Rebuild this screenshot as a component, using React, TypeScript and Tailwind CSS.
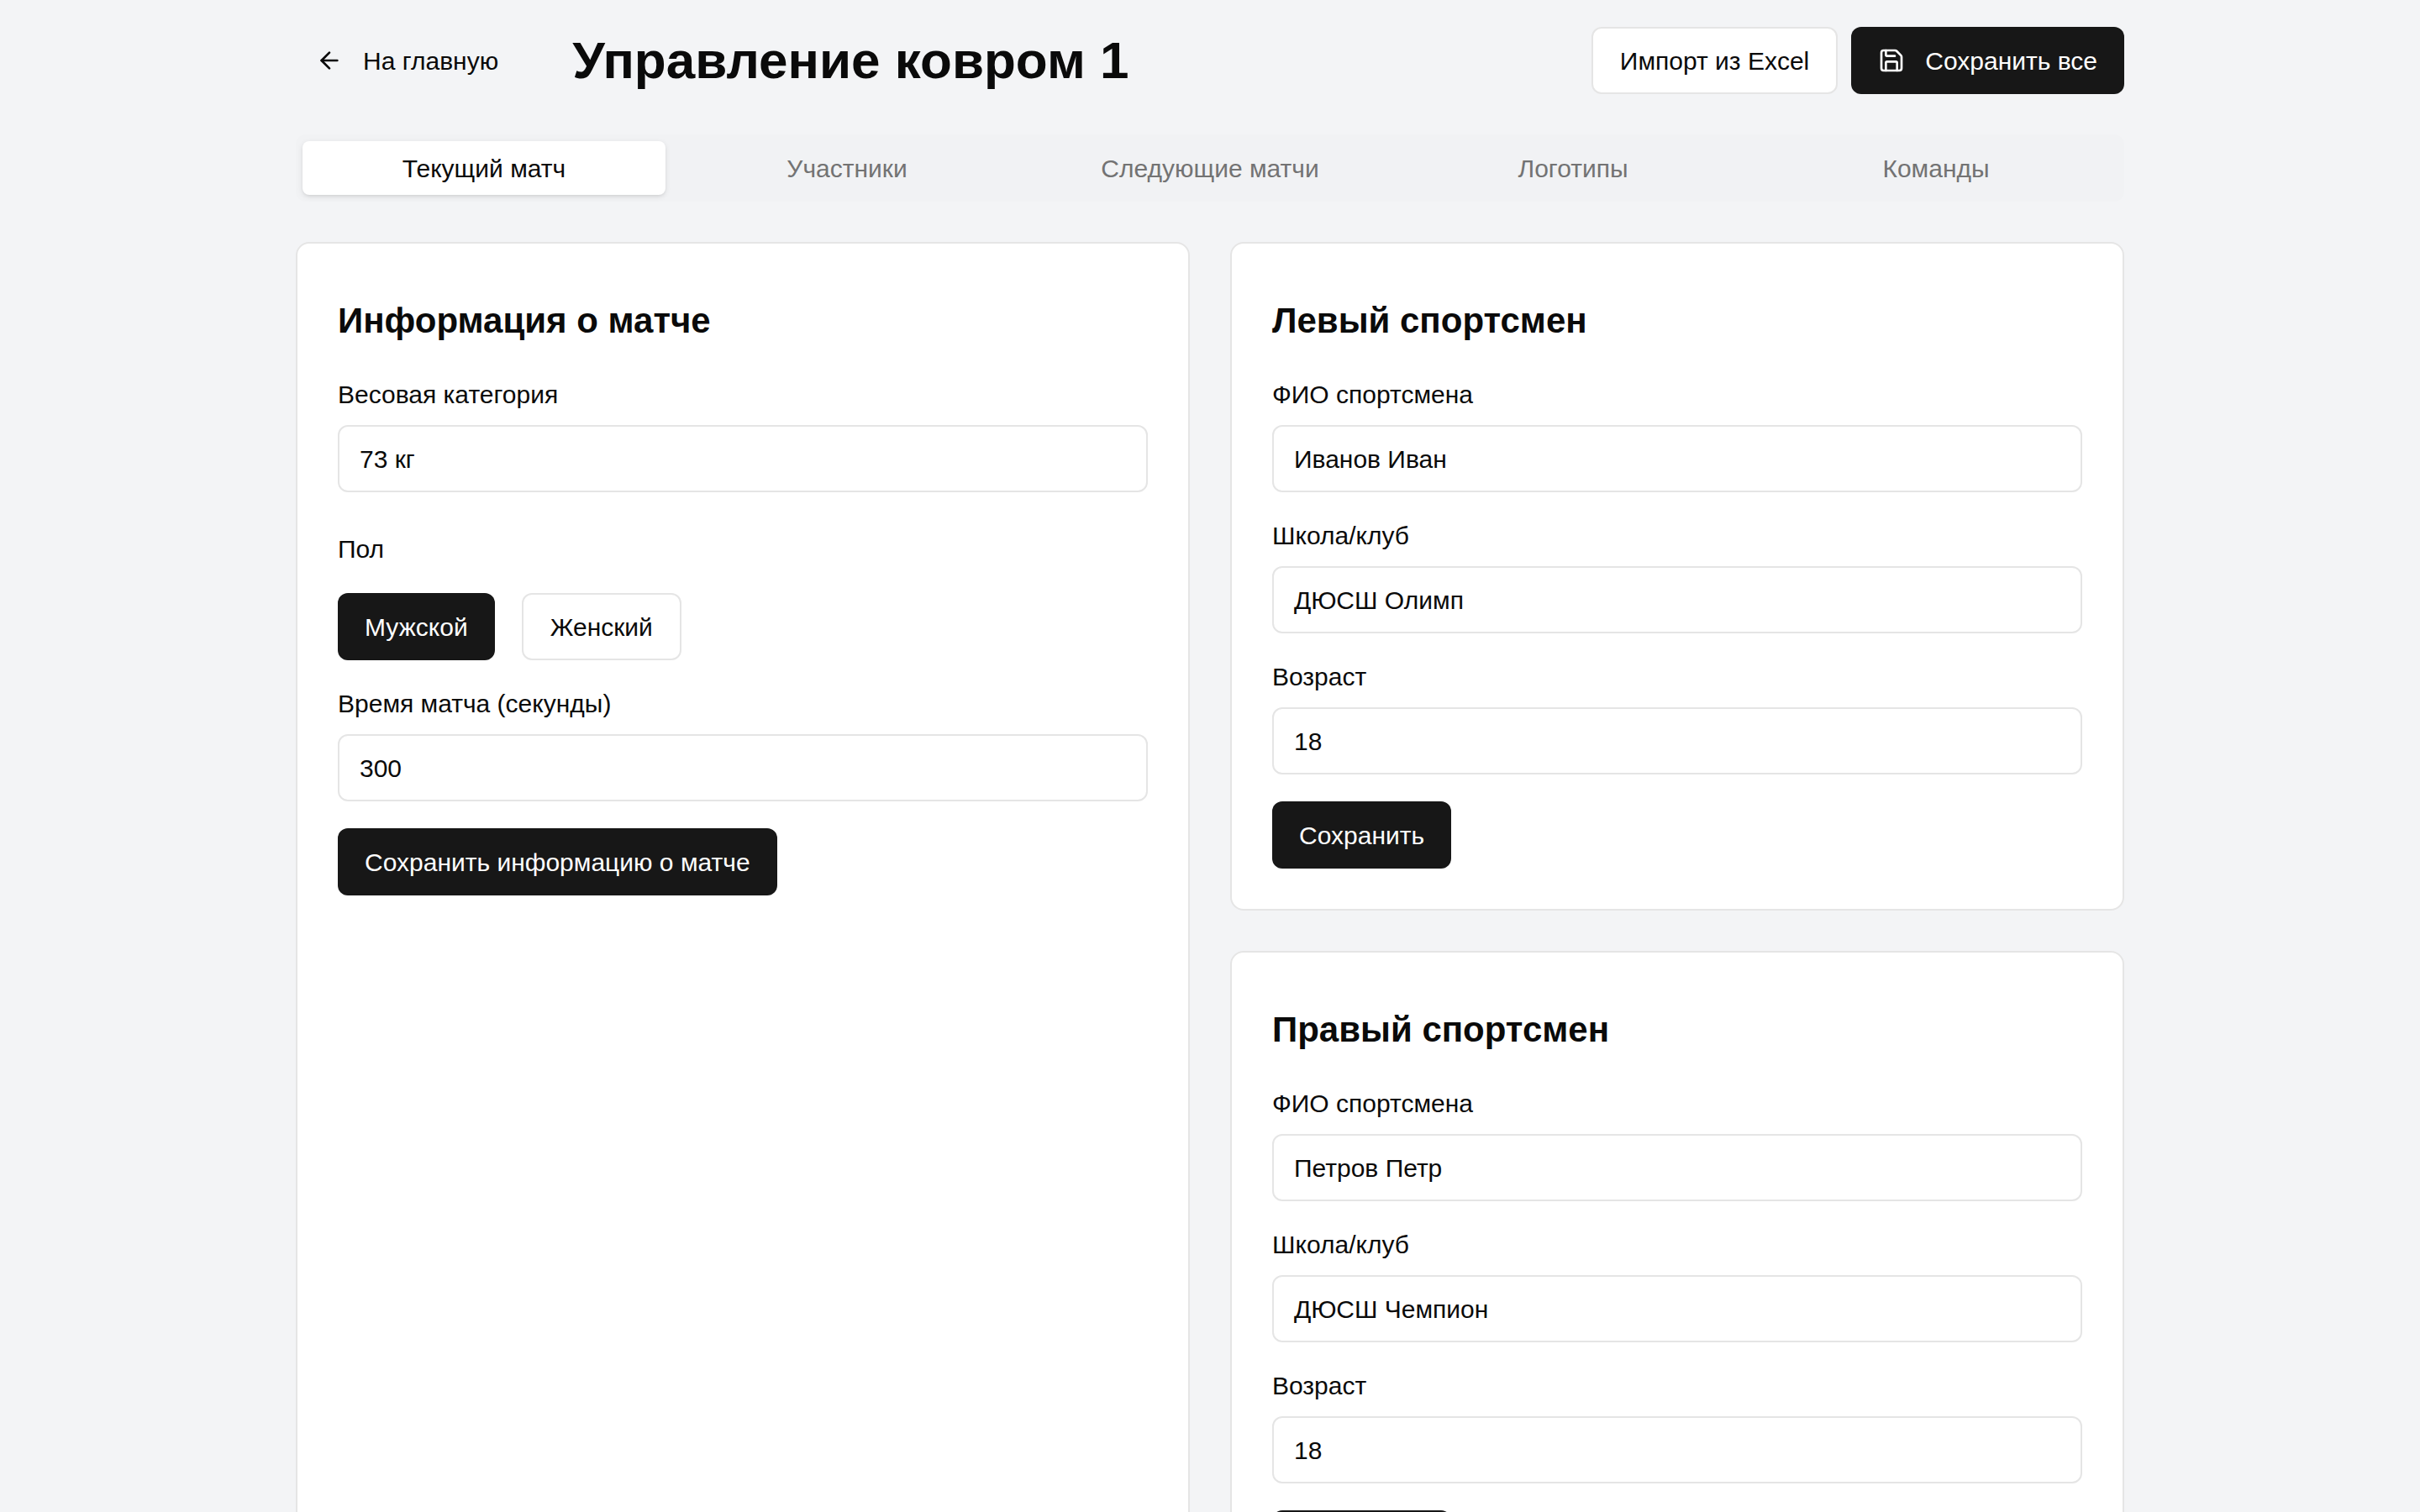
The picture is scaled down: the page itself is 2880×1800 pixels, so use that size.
import React from "react";

const Field = ({ label, value }: { label: string; value: string }) => (
  <div className="flex flex-col gap-2">
    <label className="text-[15px] font-medium leading-5 text-[#0a0a0a]">{label}</label>
    <div className="flex h-10 items-center rounded-md border border-[#e5e5e5] bg-white px-3 text-[15px] text-[#0a0a0a]">{value}</div>
  </div>
);

const Btn = ({ children }: { children: React.ReactNode }) => (
  <div className="self-start rounded-md bg-[#171717] px-4 h-10 flex items-center text-[15px] font-medium text-white">{children}</div>
);

const Athlete = ({ title, name, club }: { title: string; name: string; club: string }) => (
  <div className="rounded-lg border border-[#e5e5e5] bg-white p-6 flex flex-col gap-4">
    <h2 className="text-[21px] font-bold leading-7 mt-2 mb-1">{title}</h2>
    <Field label="ФИО спортсмена" value={name} />
    <Field label="Школа/клуб" value={club} />
    <Field label="Возраст" value="18" />
    <Btn>Сохранить</Btn>
  </div>
);

export default function App() {
  return (
    <div className="[zoom:2] min-h-[900px] bg-[#f3f4f6] text-[#0a0a0a]" style={{ fontFamily: '"Liberation Sans", Arial, sans-serif' }}>
      <div className="mx-auto max-w-[1152px] px-8 pt-4">
        <div className="flex items-center justify-between h-10">
          <div className="flex items-center gap-8">
            <div className="flex items-center gap-3 px-3 text-[15px] font-medium">
              <svg width="16" height="16" viewBox="0 0 24 24" fill="none" stroke="currentColor" strokeWidth="2" strokeLinecap="round" strokeLinejoin="round"><path d="m12 19-7-7 7-7" /><path d="M19 12H5" /></svg>
              На главную
            </div>
            <h1 className="text-[31px] font-bold leading-9">Управление ковром 1</h1>
          </div>
          <div className="flex items-center gap-2">
            <div className="flex h-10 items-center rounded-md border border-[#e5e5e5] bg-white px-4 text-[15px] font-medium">Импорт из Excel</div>
            <div className="flex h-10 items-center gap-3 rounded-md bg-[#171717] px-4 text-[15px] font-medium text-white">
              <svg width="16" height="16" viewBox="0 0 24 24" fill="none" stroke="currentColor" strokeWidth="2" strokeLinecap="round" strokeLinejoin="round"><path d="M15.2 3a2 2 0 0 1 1.4.6l3.8 3.8a2 2 0 0 1 .6 1.4V19a2 2 0 0 1-2 2H5a2 2 0 0 1-2-2V5a2 2 0 0 1 2-2z" /><path d="M17 21v-7a1 1 0 0 0-1-1H8a1 1 0 0 0-1 1v7" /><path d="M7 3v4a1 1 0 0 0 1 1h7" /></svg>
              Сохранить все
            </div>
          </div>
        </div>
        <div className="mt-6 grid h-10 grid-cols-5 rounded-md bg-[#f1f2f4] p-1 text-[15px] font-medium text-[#737373]">
          <div className="flex items-center justify-center rounded-sm bg-white text-[#0a0a0a] shadow-sm">Текущий матч</div>
          <div className="flex items-center justify-center">Участники</div>
          <div className="flex items-center justify-center">Следующие матчи</div>
          <div className="flex items-center justify-center">Логотипы</div>
          <div className="flex items-center justify-center">Команды</div>
        </div>
        <div className="mt-6 grid grid-cols-2 gap-6">
          <div className="rounded-lg border border-[#e5e5e5] bg-white p-6 flex flex-col gap-4">
            <h2 className="text-[21px] font-bold leading-7 mt-2 mb-1">Информация о матче</h2>
            <Field label="Весовая категория" value="73 кг" />
            <div className="flex flex-col gap-2">
              <label className="text-[15px] font-medium leading-5 mt-2 mb-2">Пол</label>
              <div className="flex gap-4">
                <div className="flex h-10 items-center rounded-md bg-[#171717] px-4 text-[15px] font-medium text-white">Мужской</div>
                <div className="flex h-10 items-center rounded-md border border-[#e5e5e5] bg-white px-4 text-[15px] font-medium">Женский</div>
              </div>
            </div>
            <Field label="Время матча (секунды)" value="300" />
            <Btn>Сохранить информацию о матче</Btn>
          </div>
          <div className="flex flex-col gap-6">
            <Athlete title="Левый спортсмен" name="Иванов Иван" club="ДЮСШ Олимп" />
            <Athlete title="Правый спортсмен" name="Петров Петр" club="ДЮСШ Чемпион" />
          </div>
        </div>
      </div>
    </div>
  );
}
